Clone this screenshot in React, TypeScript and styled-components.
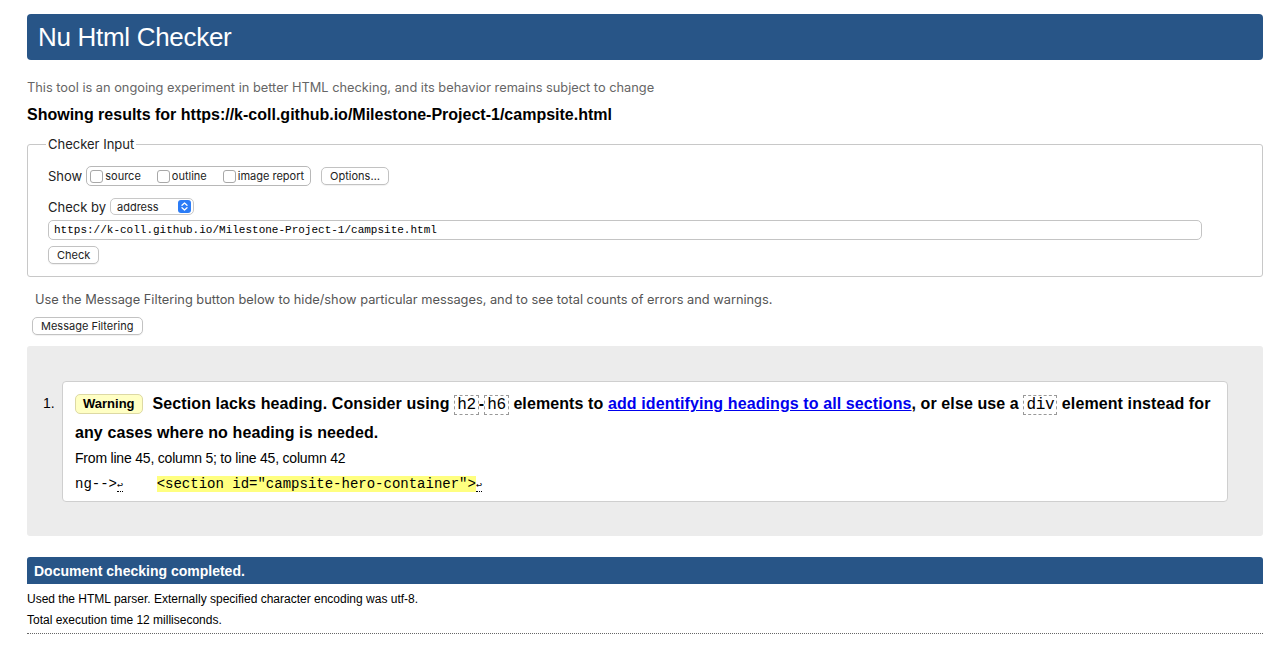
import React, { FC } from "react";
import styled, { createGlobalStyle } from "styled-components";

const GlobalStyle = createGlobalStyle`
  html, body {
    margin: 0;
    padding: 0;
    background: #fff;
  }
  body {
    font-family: "Liberation Sans", Arial, sans-serif;
    color: #000;
  }
`;

const ui = `Inter, "Noto Sans", "Liberation Sans", sans-serif`;
const mono = `"Liberation Mono", "DejaVu Sans Mono", monospace`;

const Page = styled.div`
  padding: 14px 25px 20px 27px;
`;

const Header = styled.h1`
  margin: 0;
  height: 46px;
  display: flex;
  align-items: center;
  padding: 0 11px;
  background: #285587;
  border-radius: 4px;
  color: #fff;
  font-weight: normal;
  font-size: 26px;
  letter-spacing: -0.3px;
`;

const Intro = styled.p`
  margin: 20px 0 0;
  font-family: ${ui};
  font-size: 12.8px;
  color: #666;
`;

const Results = styled.h2`
  margin: 11px 0 0;
  font-size: 16px;
`;

const Fieldset = styled.fieldset`
  margin: 12px 0 0;
  padding: 4px 20px 12px 20px;
  border: 1px solid #c8c8c8;
  border-radius: 3px;
`;

const Legend = styled.legend`
  padding: 0 2px;
  margin-left: -2px;
  font-family: ${ui};
  font-size: 13px;
  color: #222;
`;

const Row = styled.div<{ $top: number }>`
  display: flex;
  align-items: center;
  gap: 4px;
  font-family: ${ui};
  font-size: 13px;
  color: #222;
  margin-top: ${(p) => p.$top}px;
`;

const OptionGroup = styled.div`
  display: flex;
  align-items: center;
  gap: 16px;
  height: 18px;
  padding: 0 6px 0 3px;
  border: 1px solid #b8b8b8;
  border-radius: 5px;
  font-size: 11px;
`;

const CheckLabel = styled.label`
  display: flex;
  align-items: center;
  gap: 2px;
`;

const Box = styled.span`
  width: 11px;
  height: 11px;
  border: 1px solid #a8a8a8;
  border-radius: 3px;
  background: #fff;
`;

const Button = styled.button<{ $ml?: number }>`
  height: 18px;
  padding: 0 8px;
  margin-left: ${(p) => p.$ml ?? 0}px;
  background: #fff;
  border: 1px solid #c2c2c2;
  border-radius: 5px;
  font-family: ${ui};
  font-size: 11px;
  color: #222;
  box-shadow: 0 1px 1px rgba(0, 0, 0, 0.06);
`;

const Select = styled.div`
  display: flex;
  align-items: center;
  justify-content: space-between;
  width: 84px;
  height: 17px;
  padding: 0 2px 0 6px;
  box-sizing: border-box;
  border: 1px solid #c8c8c8;
  border-radius: 5px;
  font-size: 11px;
`;

const Stepper = styled.span`
  display: flex;
  align-items: center;
  justify-content: center;
  width: 13px;
  height: 13px;
  border-radius: 3px;
  background: #2b7cf6;
`;

const UrlInput = styled.div`
  margin-top: 5px;
  width: 1154px;
  height: 20px;
  display: flex;
  align-items: center;
  padding: 0 5px;
  box-sizing: border-box;
  border: 1px solid #c4c4c4;
  border-radius: 5px;
  font-family: ${mono};
  font-size: 11px;
`;

const CheckRow = styled.div`
  margin-top: 5px;
`;

const FilterNote = styled.p`
  margin: 15px 0 0 8px;
  font-family: ${ui};
  font-size: 12.8px;
  color: #555;
`;

const FilterRow = styled.div`
  margin: 9px 0 0 5px;
`;

const Messages = styled.ol`
  margin: 11px 0 0;
  padding: 35px 35px 34px 35px;
  background: #ececec;
  border-radius: 3px;
  list-style: none;
`;

const Item = styled.li`
  display: flex;
  gap: 2px;
`;

const Index = styled.span`
  width: 17px;
  padding-top: 14px;
  font-size: 14px;
  margin-left: -19px;
  flex-shrink: 0;
`;

const Message = styled.div`
  flex: 1;
  padding: 8px 12px 9px 12px;
  background: #fff;
  border: 1px solid #cfcfcf;
  border-radius: 4px;
`;

const Title = styled.p`
  margin: 0;
  font-size: 16px;
  font-weight: bold;
  line-height: 28px;
  letter-spacing: 0.1px;
`;

const Badge = styled.span`
  display: inline-block;
  padding: 0 7px;
  margin-right: 10px;
  line-height: 18px;
  background: #ffffc4;
  border: 1px solid #ddd9a4;
  border-radius: 5px;
  font-size: 13px;
  letter-spacing: 0;
  vertical-align: 1px;
`;

const Code = styled.code`
  font-family: ${mono};
  font-weight: normal;
  font-size: 16px;
  padding: 0 2px;
  border: 1px dashed #999;
  letter-spacing: -0.3px;
`;

const Link = styled.a`
  color: #0000ee;
  text-decoration: underline;
`;

const Location = styled.p`
  margin: 3px 0 0;
  font-size: 14px;
  letter-spacing: -0.2px;
`;

const Extract = styled.p`
  margin: 10px 0 0;
  font-family: ${mono};
  font-size: 14px;
  white-space: pre;
`;

const Highlight = styled.mark`
  background: #ffff80;
  color: #000;
`;

const Lf = styled.span`
  font-size: 10px;
  border-bottom: 1px dotted #000;
`;

const Done = styled.h2`
  margin: 21px 0 0;
  height: 27px;
  display: flex;
  align-items: center;
  padding: 0 7px;
  background: #285587;
  border-radius: 3px 3px 0 0;
  color: #fff;
  font-size: 14px;
`;

const Detail = styled.p<{ $top: number }>`
  margin: ${(p) => p.$top}px 0 0;
  font-size: 12px;
`;

const Rule = styled.hr`
  margin: 6px 0 0;
  border: 0;
  border-top: 1px dotted #666;
`;

const Checkbox: FC<{ label: string }> = ({ label }) => (
  <CheckLabel>
    <Box />
    {label}
  </CheckLabel>
);

const url = "https://k-coll.github.io/Milestone-Project-1/campsite.html";

const App: FC = () => (
  <>
    <GlobalStyle />
    <Page>
      <Header>Nu Html Checker</Header>
      <Intro>
        This tool is an ongoing experiment in better HTML checking, and its
        behavior remains subject to change
      </Intro>
      <Results>Showing results for {url}</Results>

      <Fieldset>
        <Legend>Checker Input</Legend>
        <Row $top={10}>
          Show
          <OptionGroup>
            <Checkbox label="source" />
            <Checkbox label="outline" />
            <Checkbox label="image report" />
          </OptionGroup>
          <Button $ml={6}>Options…</Button>
        </Row>
        <Row $top={12}>
          Check by
          <Select>
            address
            <Stepper>
              <svg width="7" height="9" viewBox="0 0 7 9" fill="none">
                <path d="M1 3.2 3.5 1 6 3.2M1 5.8 3.5 8 6 5.8" stroke="#fff" strokeWidth="1.3" strokeLinecap="round" strokeLinejoin="round" />
              </svg>
            </Stepper>
          </Select>
        </Row>
        <UrlInput>{url}</UrlInput>
        <CheckRow>
          <Button>Check</Button>
        </CheckRow>
      </Fieldset>

      <FilterNote>
        Use the Message Filtering button below to hide/show particular messages,
        and to see total counts of errors and warnings.
      </FilterNote>
      <FilterRow>
        <Button>Message Filtering</Button>
      </FilterRow>

      <Messages>
        <Item>
          <Index>1.</Index>
          <Message>
            <Title>
              <Badge>Warning</Badge>
              Section lacks heading. Consider using <Code>h2</Code>-<Code>h6</Code>{" "}
              elements to{" "}
              <Link href="#">add identifying headings to all sections</Link>, or
              else use a <Code>div</Code> element instead for any cases where no
              heading is needed.
            </Title>
            <Location>From line 45, column 5; to line 45, column 42</Location>
            <Extract>
              ng--&gt;<Lf>↩</Lf>{"    "}
              <Highlight>&lt;section id="campsite-hero-container"&gt;</Highlight>
              <Lf>↩</Lf>
            </Extract>
          </Message>
        </Item>
      </Messages>

      <Done>Document checking completed.</Done>
      <Detail $top={8}>
        Used the HTML parser. Externally specified character encoding was utf-8.
      </Detail>
      <Detail $top={7}>Total execution time 12 milliseconds.</Detail>
      <Rule />
    </Page>
  </>
);

export default App;
